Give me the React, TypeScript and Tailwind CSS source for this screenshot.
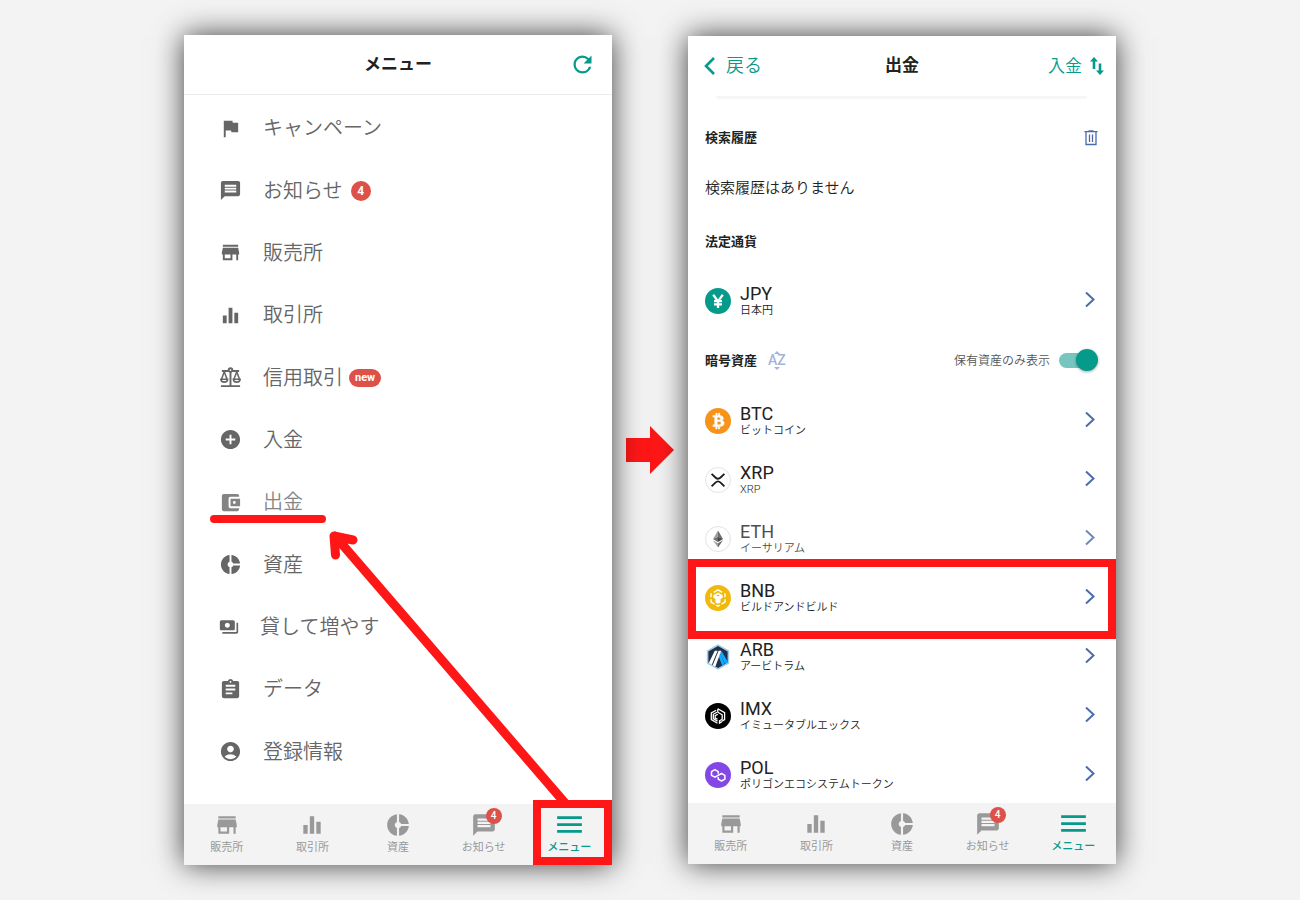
import type { ReactNode } from 'react';
import type { IconType } from 'react-icons';
import {
  MdAccountBalanceWallet,
  MdAccountCircle,
  MdAddCircle,
  MdAssignment,
  MdDonutSmall,
  MdEqualizer,
  MdFlag,
  MdMenu,
  MdMessage,
  MdPayments,
  MdRefresh,
  MdStore,
} from 'react-icons/md';

function ScaleIcon({ className }: { className?: string }) {
  return (
    <svg viewBox="0 0 24 24" className={className} fill="none" stroke="currentColor" strokeWidth="2">
      <circle cx="12" cy="4.2" r="1.9" />
      <path d="M12 6V20M2 21h20M3 5.2h7M14 5.2h7" />
      <path d="M5.500 6L2.500 14M5.500 6L8.500 14M18.500 6L15.500 14M18.500 6L21.500 14" strokeWidth="1.6" />
      <path
        d="M2 13.800h7c0 1.800-1.500 3-3.500 3s-3.500-1.200-3.500-3zM15 13.800h7c0 1.800-1.500 3-3.500 3s-3.500-1.200-3.500-3z"
        strokeWidth="1.7"
      />
    </svg>
  );
}

interface MenuItem {
  label: string;
  icon: IconType | typeof ScaleIcon;
  count?: number;
  isNew?: boolean;
  faded?: boolean;
  smallIcon?: boolean;
}

const menuItems: MenuItem[] = [
  { label: 'キャンペーン', icon: MdFlag },
  { label: 'お知らせ', icon: MdMessage, count: 4 },
  { label: '販売所', icon: MdStore },
  { label: '取引所', icon: MdEqualizer },
  { label: '信用取引', icon: ScaleIcon, isNew: true },
  { label: '入金', icon: MdAddCircle },
  { label: '出金', icon: MdAccountBalanceWallet, faded: true },
  { label: '資産', icon: MdDonutSmall },
  { label: '貸して増やす', icon: MdPayments, smallIcon: true },
  { label: 'データ', icon: MdAssignment },
  { label: '登録情報', icon: MdAccountCircle },
];

const tabs = [
  { label: '販売所', icon: MdStore },
  { label: '取引所', icon: MdEqualizer },
  { label: '資産', icon: MdDonutSmall },
  { label: 'お知らせ', icon: MdMessage, count: 4 },
  { label: 'メニュー', icon: MdMenu, active: true },
];

/* Coin logos, all on a 26x26 box */

function JpyLogo() {
  return (
    <svg viewBox="0 0 26 26" className="size-[26px]">
      <circle cx="13" cy="13" r="13" fill="#069a8b" />
      <path d="M8.200 6.800l4.800 6.600 4.800-6.600M13 13v7M9 13.200h8M9 16.400h8" fill="none" stroke="#fff" strokeWidth="2.300" />
    </svg>
  );
}

function BtcLogo() {
  return (
    <svg viewBox="0 0 32 32" className="size-[26px]">
      <circle cx="16" cy="16" r="16" fill="#f7931a" />
      <path
        transform="rotate(-14 16 16)"
        fill="#fff"
        fillRule="evenodd"
        stroke="#fff"
        strokeWidth=".5"
        d="M23.189 14.02c.314-2.096-1.283-3.223-3.465-3.975l.708-2.84-1.728-.43-.69 2.765c-.454-.114-.92-.22-1.385-.326l.695-2.783L15.596 6l-.708 2.839c-.376-.086-.746-.17-1.104-.26l.002-.009-2.384-.595-.46 1.846s1.283.294 1.256.312c.7.175.826.638.805 1.006l-.806 3.235c.048.012.11.03.18.057l-.183-.045-1.13 4.532c-.086.212-.303.531-.793.41.018.025-1.256-.313-1.256-.313l-.858 1.978 2.25.561c.418.105.828.215 1.231.318l-.715 2.872 1.727.43.708-2.84c.472.127.93.245 1.378.357l-.706 2.828 1.728.43.715-2.866c2.948.558 5.164.333 6.097-2.333.752-2.146-.037-3.385-1.588-4.192 1.13-.26 1.98-1.003 2.207-2.538zm-3.95 5.538c-.533 2.147-4.148.986-5.32.695l.95-3.805c1.172.293 4.929.872 4.37 3.11zm.535-5.569c-.487 1.953-3.495.96-4.47.717l.86-3.45c.975.243 4.118.696 3.61 2.733z"
      />
    </svg>
  );
}

function XrpLogo() {
  return (
    <svg viewBox="0 0 26 26" className="size-[26px]">
      <circle cx="13" cy="13" r="12.5" fill="#fff" stroke="#e4e4e4" />
      <path
        d="M6.6 6.8l3.8 3.7c1.5 1.4 3.7 1.4 5.2 0l3.8-3.7M6.6 19.4l3.8-3.8c1.5-1.4 3.7-1.4 5.2 0l3.8 3.8"
        fill="none"
        stroke="#1c1c1c"
        strokeWidth="1.8"
      />
    </svg>
  );
}

function EthLogo() {
  return (
    <svg viewBox="0 0 26 26" className="size-[26px]">
      <circle cx="13" cy="13" r="12.5" fill="#fff" stroke="#dcdcdc" />
      <path d="M13 4.5L8 13l5-2.2z" fill="#8a8a8a" />
      <path d="M13 4.5l5 8.5-5-2.2z" fill="#4a4a4a" />
      <path d="M13 10.8L8 13l5 3z" fill="#4a4a4a" />
      <path d="M13 10.8l5 2.2-5 3z" fill="#1c1c1c" />
      <path d="M8 14.2l5 3V21.5z" fill="#8a8a8a" />
      <path d="M18 14.2l-5 3V21.5z" fill="#4a4a4a" />
    </svg>
  );
}

function BnbLogo() {
  return (
    <svg viewBox="0 0 26 26" className="size-[26px]">
      <circle cx="13" cy="13" r="13" fill="#f0b90b" />
      <path
        d="M8.800 7.300L13 4.900l4.200 2.400M6 12.200V9l.8-.5M20 12.200V9l-.8-.5M6 14.200v2.900l3.600 2.100M20 14.200v2.900l-3.600 2.100M11 20l2 1.200 2-1.200"
        fill="none"
        stroke="#fff"
        strokeWidth="1.400"
      />
      <path
        d="M8.300 10.300L13 7.600l4.700 2.700v2.500l-2.200 1.300v3.300L13 18.800l-2.500-1.400v-3.300l-2.200-1.300zM13 9.600l-1.600.9 1.600.9 1.600-.9z"
        fill="#fff"
        fillRule="evenodd"
      />
    </svg>
  );
}

function ArbLogo() {
  return (
    <svg viewBox="0 0 26 26" className="size-[26px]">
      <path d="M13 .3l11.2 6.3v12.8L13 25.7 1.8 19.4V6.6z" fill="#9dcced" />
      <path d="M13 2l9.6 5.5v11L13 24l-9.6-5.5v-11z" fill="#213147" />
      <path d="M14.8 9.4L16.5 7l6.1 10.5v1L20 20z" fill="#12aaff" />
      <path d="M13.6 12.6l1.9-2.4L19.6 20l-2.4 1.6z" fill="#12aaff" />
      <path d="M9.8 6.8h2.8L6.8 20.7l-3-1.8z" fill="#fff" />
      <path d="M13.6 6.8h2.7L10.3 22.8l-2.6-1.5z" fill="#fff" />
    </svg>
  );
}

function ImxLogo() {
  return (
    <svg viewBox="0 0 26 26" className="size-[26px]">
      <circle cx="13" cy="13" r="13" fill="#000" />
      <g fill="none" stroke="#fff" strokeWidth="1.300">
        <path d="M12.800 5.800v3.400l4.300 2.500M12.800 5.800L19.600 9.600v7l-2.800 1.700M17.200 11.600v4.600l-2.700 1.600v2.300l2.300-1.500" />
        <path d="M11.200 7.200L6.300 10v6.600l6.200 3.700M12 9.200L8.300 11.300v4.300l4.200 2.500" />
        <path d="M12.800 11.200l-2.600 1.400v2.400l2.300 1.300" />
      </g>
    </svg>
  );
}

function PolLogo() {
  return (
    <svg viewBox="0 0 26 26" className="size-[26px]">
      <circle cx="13" cy="13" r="13" fill="#8247e5" />
      <path
        d="M13.200 11.700V9.600L9.900 7.700 6.500 9.600v3.700l3.400 1.900 6.600-3.700 3.400 1.900v3.700l-3.400 1.900-3.300-1.900V15"
        fill="none"
        stroke="#fff"
        strokeWidth="1.500"
        strokeLinejoin="round"
      />
    </svg>
  );
}

interface Asset {
  code: string;
  name: string;
  logo: ReactNode;
  faded?: boolean;
  marked?: boolean;
}

const cryptoAssets: Asset[] = [
  { code: 'BTC', name: 'ビットコイン', logo: <BtcLogo /> },
  { code: 'XRP', name: 'XRP', logo: <XrpLogo /> },
  { code: 'ETH', name: 'イーサリアム', logo: <EthLogo />, faded: true },
  { code: 'BNB', name: 'ビルドアンドビルド', logo: <BnbLogo />, marked: true },
  { code: 'ARB', name: 'アービトラム', logo: <ArbLogo /> },
  { code: 'IMX', name: 'イミュータブルエックス', logo: <ImxLogo /> },
  { code: 'POL', name: 'ポリゴンエコシステムトークン', logo: <PolLogo /> },
];

function TabBar() {
  return (
    <nav className="grid h-[61px] grid-cols-5 bg-[#f3f3f3] pt-1">
      {tabs.map(({ label, icon: Icon, count, active }) => (
        <button
          key={label}
          type="button"
          className={`flex flex-col items-center ${active ? 'font-medium text-[#069a8b]' : 'text-[#999999]'}`}
        >
          <span className="relative flex h-[33px] items-center justify-center">
            <Icon className={active ? 'size-[33px]' : 'size-[26px]'} />
            {count && (
              <span className="absolute top-0 -right-[5px] flex size-4 items-center justify-center rounded-full bg-[#dd5149] text-[10px] leading-none font-medium text-white">
                {count}
              </span>
            )}
          </span>
          <span className="text-[11px] leading-[14px]">{label}</span>
        </button>
      ))}
    </nav>
  );
}

function MenuScreen() {
  return (
    <section className="relative bg-white shadow-[0_0_28px_rgba(0,0,0,0.75)]">
      <header className="grid h-[60px] grid-cols-[1fr_auto_1fr] items-center border-b border-[#ebebeb] px-4">
        <h1 className="col-start-2 text-[17px] font-bold text-[#222222]">メニュー</h1>
        <button type="button" aria-label="更新" className="justify-self-end text-[#069a8b]">
          <MdRefresh className="size-[27px]" />
        </button>
      </header>

      <ul className="mb-[21px] grid h-[688px] grid-rows-11 pt-0.5 text-[#666666]">
        {menuItems.map(({ label, icon: Icon, count, isNew, faded, smallIcon }) => (
          <li key={label} className={faded ? 'opacity-80' : ''}>
            <a href="#" className="flex h-full items-center pl-[35px]">
              <Icon className={smallIcon ? 'size-5' : 'size-[23px]'} />
              <span className="ml-[21px] text-[20px] leading-6 font-[350]">{label}</span>
              {count && (
                <span className="ml-2 flex size-5 items-center justify-center rounded-full bg-[#dd5149] text-[12px] leading-none font-bold text-white">
                  {count}
                </span>
              )}
              {isNew && (
                <span className="ml-1.5 flex h-[18px] items-center rounded-full bg-[#dd5149] px-1.5 text-[11px] leading-none font-bold text-white">
                  new
                </span>
              )}
            </a>
          </li>
        ))}
      </ul>

      <TabBar />

      {/* Hand-drawn guide marks */}
      <svg
        viewBox="0 0 428 830"
        className="pointer-events-none absolute inset-0 size-full"
        fill="none"
        stroke="#ff1717"
        strokeLinecap="round"
        strokeLinejoin="round"
      >
        <path d="M30 484h108" strokeWidth="8" />
        <path d="M381 768L151 501M169 505l-19-4 1.500 19" strokeWidth="9" />
      </svg>
      <div className="pointer-events-none absolute right-0 bottom-0 h-[65px] w-[79px] border-8 border-[#ff1717]" />
    </section>
  );
}

function AssetRow({ code, name, logo, faded, marked }: Asset) {
  return (
    <li className="relative">
      <a href="#" className={`flex h-[59px] items-center pr-[21px] pl-[17px] ${faded ? 'opacity-80' : ''}`}>
        <span className="pt-0.5">{logo}</span>
        <span className="ml-[9px] flex flex-1 flex-col pt-1 text-[#222222]">
          <span className="text-[18px] leading-[18px]">{code}</span>
          <span className="text-[11px] leading-4 font-[350]">{name}</span>
        </span>
        <svg viewBox="0 0 10 16" className="h-4 w-2.5" fill="none" stroke="#4a6cae" strokeWidth="2">
          <path d="M1 .5l7.500 7L1 14.500" />
        </svg>
      </a>
      {marked && (
        <div className="pointer-events-none absolute inset-x-0 -top-2 z-10 h-20 border-8 border-[#ff1717]" />
      )}
    </li>
  );
}

function WithdrawScreen() {
  return (
    <section className="my-px bg-white shadow-[0_0_28px_rgba(0,0,0,0.75)]">
      <header className="grid h-[60px] grid-cols-[1fr_auto_1fr] items-center px-3 text-[#069a8b]">
        <button type="button" className="flex items-center gap-2.5 justify-self-start text-[18px] leading-none font-[350]">
          <svg viewBox="0 0 16 18" className="h-[18px] w-4" fill="none" stroke="currentColor" strokeWidth="2.600">
            <path d="M14 1L6 9l8 8" />
          </svg>
          戻る
        </button>
        <h1 className="text-[17px] font-bold text-[#222222]">出金</h1>
        <button type="button" className="flex items-center gap-2 justify-self-end text-[17px] leading-none font-[350]">
          入金
          <svg viewBox="0 0 14 18" className="h-[18px] w-3.5" fill="currentColor">
            <path d="M4 0l4 4.500H5.300V12H2.700V4.500H0zM10 18l-4-4.500h2.700V6.500h2.600v7H14z" />
          </svg>
        </button>
      </header>

      <div className="mr-[29px] ml-7 h-[3px] rounded-b-full bg-[#f6f6f6]" />

      <div className="mt-[13px] flex h-[51px] items-center justify-between pr-[18px] pl-[17px]">
        <h2 className="text-[13px] font-bold text-[#222222]">検索履歴</h2>
        <button type="button" aria-label="検索履歴を削除" className="text-[#4a6cae]">
          <svg viewBox="0 0 14 16" className="h-4 w-3.5" fill="none" stroke="currentColor" strokeWidth="1.300">
            <path d="M.5 1.700h13M4.500.8h5M2 2v12.500h10V2M5.500 4.500v7.500M8.500 4.500v7.500" />
          </svg>
        </button>
      </div>
      <p className="flex h-[50px] items-center px-[17px] text-[15px] font-[350] text-[#222222]">検索履歴はありません</p>

      <h2 className="flex h-[57px] items-center px-[17px] text-[13px] font-bold text-[#222222]">法定通貨</h2>
      <ul>
        <AssetRow code="JPY" name="日本円" logo={<JpyLogo />} />
      </ul>

      <div className="flex h-[61px] items-center pt-0.5 pr-[18px] pl-[17px]">
        <h2 className="text-[13px] font-bold text-[#222222]">暗号資産</h2>
        <button type="button" className="ml-[11px] flex flex-col items-center text-[#a3b5d8]">
          <svg viewBox="0 0 6 3" className="h-[3px] w-1.5" fill="currentColor">
            <path d="M3 0l3 3H0z" />
          </svg>
          <span className="text-[14px] leading-[13px] font-medium [font-kerning:none]">AZ</span>
          <svg viewBox="0 0 6 3" className="h-[3px] w-1.5" fill="currentColor">
            <path d="M3 3l3-3H0z" />
          </svg>
        </button>
        <label htmlFor="held-only" className="ml-auto text-[12px] font-[350] text-[#555555]">
          保有資産のみ表示
        </label>
        <input
          id="held-only"
          type="checkbox"
          role="switch"
          defaultChecked
          className="relative mr-[3px] ml-[9px] h-[15px] w-9 appearance-none rounded-full bg-[#76c6bf] before:absolute before:-top-1 before:-right-[3px] before:size-[22px] before:rounded-full before:bg-[#069a8b] before:shadow-[0_1px_3px_rgba(0,0,0,0.35)]"
        />
      </div>

      <ul>
        {cryptoAssets.map((asset) => (
          <AssetRow key={asset.code} {...asset} />
        ))}
      </ul>

      <TabBar />
    </section>
  );
}

export default function App() {
  return (
    <div className="min-h-screen bg-[#f3f3f3] py-[35px] font-[Roboto,'Noto_Sans_CJK_JP',sans-serif]">
      <main className="mx-auto grid max-w-[932px] grid-cols-[1fr_76px_1fr] items-start">
        <MenuScreen />
        <svg viewBox="0 0 48 48" className="size-12 place-self-center" fill="#ff1717">
          <path d="M0 12h24V0l24 24-24 24V36H0z" />
        </svg>
        <WithdrawScreen />
      </main>
    </div>
  );
}
